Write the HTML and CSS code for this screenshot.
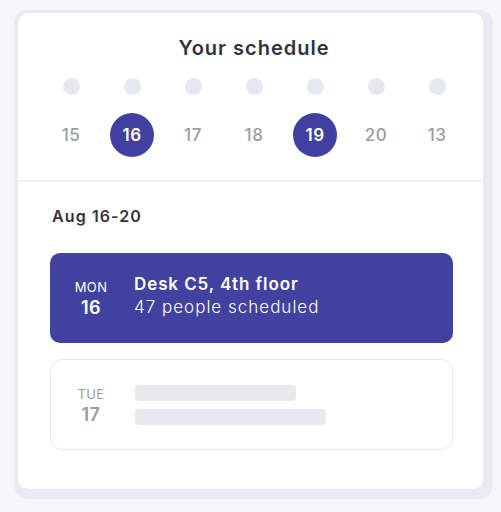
FILE: index.html
```html
<!DOCTYPE html>
<html>
<head>
<meta charset="utf-8">
<link rel="stylesheet" href="styles.css">
</head>
<body>
<div class="frame">
  <div class="card">
    <div class="header">
      <div class="title">Your schedule</div>
      <div class="week">
        <div class="dot"></div><div class="dot"></div><div class="dot"></div><div class="dot"></div><div class="dot"></div><div class="dot"></div><div class="dot"></div>
        <div class="num">15</div>
        <div class="num sel">16</div>
        <div class="num">17</div>
        <div class="num">18</div>
        <div class="num sel">19</div>
        <div class="num">20</div>
        <div class="num">13</div>
      </div>
    </div>
    <div class="body">
      <div class="range">Aug 16-20</div>
      <div class="item active">
        <div class="day"><div class="dname">MON</div><div class="dnum">16</div></div>
        <div class="info">
          <div class="place">Desk C5, 4th floor</div>
          <div class="people">47 people scheduled</div>
        </div>
      </div>
      <div class="item empty">
        <div class="day"><div class="dname">TUE</div><div class="dnum">17</div></div>
        <div class="info">
          <div class="bar bar1"></div>
          <div class="bar bar2"></div>
        </div>
      </div>
    </div>
  </div>
</div>
</body>
</html>
```
FILE: styles.css
```css
html, body {
  margin: 0;
  padding: 0;
  background: #f5f5fa;
  font-family: "Inter", "Lato", sans-serif;
}
.frame {
  margin: 10px 8px 13px 14px;
  padding: 3px 10px 10px 4px;
  background: #e9eaf2;
  border-radius: 14px;
}
.card {
  background: #ffffff;
  border-radius: 10px;
  height: 476px;
  box-sizing: border-box;
}
.header {
  padding: 23px 0 23px 7px;
  border-bottom: 2px solid #eef0f5;
}
.title {
  text-align: center;
  font-size: 20px;
  line-height: 24px;
  font-weight: 600;
  color: #30323f;
  letter-spacing: 1px;
}
.week {
  margin-top: 18px;
  display: grid;
  grid-template-columns: repeat(7, 61px);
  justify-content: center;
  row-gap: 18px;
  justify-items: center;
  align-items: center;
}
.dot {
  width: 17px;
  height: 17px;
  border-radius: 50%;
  background: #e6e8f1;
}
.num {
  width: 44px;
  height: 44px;
  border-radius: 50%;
  display: flex;
  align-items: center;
  justify-content: center;
  font-size: 17px;
  font-weight: 500;
  color: #9a9ca8;
  letter-spacing: 0.5px;
}
.num.sel {
  background: #4040a1;
  color: #ffffff;
  font-weight: 600;
}
.body {
  padding: 24px 30px 0 32px;
}
.range {
  font-size: 16px;
  line-height: 20px;
  font-weight: 600;
  color: #33343f;
  padding-left: 2px;
  letter-spacing: 1.1px;
}
.item {
  display: flex;
  align-items: center;
  border-radius: 10px;
  box-sizing: border-box;
}
.item.active {
  margin-top: 27px;
  height: 90px;
  background: #4141a0;
  color: #ffffff;
}
.item.empty {
  margin-top: 16px;
  height: 91px;
  border: 1px solid #e6e7ee;
  border-radius: 12px;
}
.day {
  width: 82px;
  text-align: center;
  flex: none;
}
.empty .day {
  width: 80px;
}
.dname {
  font-size: 13px;
  line-height: 20px;
  letter-spacing: 0.4px;
}
.dnum {
  font-size: 18px;
  line-height: 22px;
  font-weight: 600;
  letter-spacing: 0.4px;
}
.empty .dname, .empty .dnum {
  color: #9a9ba6;
}
.info {
  padding-left: 2px;
  padding-bottom: 4px;
}
.place {
  font-size: 17px;
  line-height: 23px;
  font-weight: 600;
  letter-spacing: 0.9px;
}
.people {
  font-size: 17px;
  line-height: 23px;
  font-weight: 300;
  letter-spacing: 1px;
}
.empty .info {
  padding: 0 0 0 4px;
  display: flex;
  flex-direction: column;
  gap: 8px;
}
.bar {
  height: 16px;
  border-radius: 4px;
  background: #e8e8ef;
}
.bar1 { width: 161px; }
.bar2 { width: 191px; }
```
